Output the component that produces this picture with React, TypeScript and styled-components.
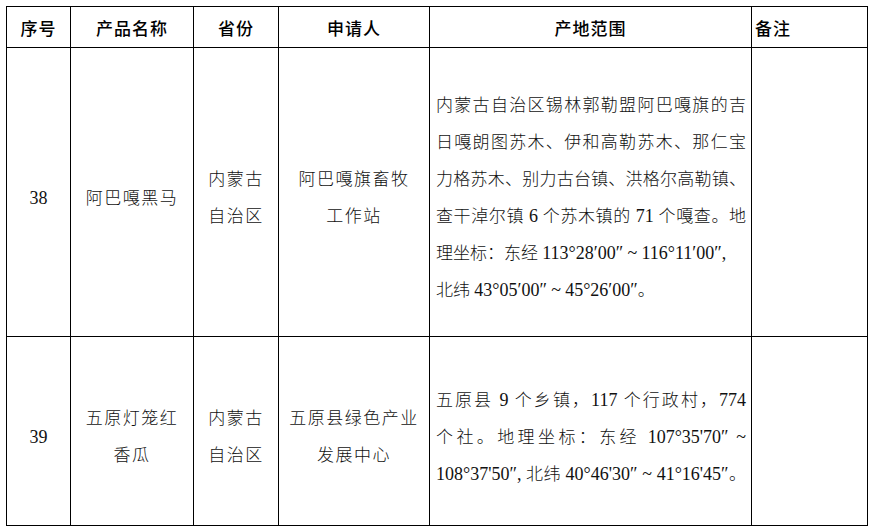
import React from 'react';
import styled, { createGlobalStyle } from 'styled-components';

const GlobalStyle = createGlobalStyle`
  html, body {
    margin: 0;
    padding: 0;
    background: #fff;
  }
`;

const Page = styled.div`
  padding: 6px 0 0 6px;
  font-family: 'Liberation Serif', 'Noto Sans CJK SC', serif;
  color: #111;
`;

const Table = styled.table`
  border-collapse: collapse;
  table-layout: fixed;
  width: 861px;
`;

const Col = styled.col<{ $w: number }>`
  width: ${(p) => p.$w}px;
`;

const HeadRow = styled.tr`
  height: 41px;
`;

const Th = styled.th<{ $align?: 'left' | 'center' }>`
  border: 1px solid #000;
  padding: ${(p) => (p.$align === 'left' ? '0 0 0 3px' : '0')};
  font-family: 'Noto Sans CJK SC', sans-serif;
  font-size: 17px;
  font-weight: 500;
  letter-spacing: 1px;
  color: #000;
  text-align: ${(p) => p.$align ?? 'center'};
  vertical-align: middle;
`;

const BodyRow = styled.tr<{ $h: number }>`
  height: ${(p) => p.$h}px;
`;

const Td = styled.td`
  border: 1px solid #000;
  padding: 12px 0 0;
  vertical-align: middle;
  text-align: center;
  font-family: 'Liberation Serif', 'Noto Sans CJK SC', serif;
  font-size: 17px;
  font-weight: 300;
  line-height: 37px;
  letter-spacing: 1.5px;
`;

const NumCell = styled(Td)`
  font-size: 18px;
  font-weight: 400;
  letter-spacing: 0;
`;

const AreaCell = styled(Td)`
  padding: 12px 5px 0 6px;
  text-align: left;
  letter-spacing: 0;
`;

const Line = styled.div<{ $justify?: boolean }>`
  white-space: nowrap;
  text-align: ${(p) => (p.$justify ? 'justify' : 'left')};
  text-align-last: ${(p) => (p.$justify ? 'justify' : 'left')};
`;

const Latin = styled.span`
  font-size: 18px;
  font-weight: 400;
`;

type AreaLine = { text: string; justify?: boolean };

type Entry = {
  no: string;
  height: number;
  name: string[];
  province: string[];
  applicant: string[];
  area: AreaLine[];
};

const entries: Entry[] = [
  {
    no: '38',
    height: 289,
    name: ['阿巴嘎黑马'],
    province: ['内蒙古', '自治区'],
    applicant: ['阿巴嘎旗畜牧', '工作站'],
    area: [
      { text: '内蒙古自治区锡林郭勒盟阿巴嘎旗的吉', justify: true },
      { text: '日嘎朗图苏木、伊和高勒苏木、那仁宝', justify: true },
      { text: '力格苏木、别力古台镇、洪格尔高勒镇、', justify: true },
      { text: '查干淖尔镇 6 个苏木镇的 71 个嘎查。地', justify: true },
      { text: '理坐标：东经 113°28′00″ ~ 116°11′00″,' },
      { text: '北纬 43°05′00″ ~ 45°26′00″。' },
    ],
  },
  {
    no: '39',
    height: 189,
    name: ['五原灯笼红', '香瓜'],
    province: ['内蒙古', '自治区'],
    applicant: ['五原县绿色产业', '发展中心'],
    area: [
      { text: '五原县 9 个乡镇，117 个行政村，774', justify: true },
      { text: '个社。地理坐标：东经 107°35\'70″ ~', justify: true },
      { text: '108°37\'50″, 北纬 40°46\'30″ ~ 41°16\'45″。', justify: true },
    ],
  },
];

// wrap latin runs (digits, degree marks) so they get the larger serif size
function renderMixed(text: string) {
  return text
    .split(/([0-9°′″'",~.]+)/)
    .filter((s) => s.length > 0)
    .map((s, i) => (/[0-9°′″'",~.]/.test(s) ? <Latin key={i}>{s}</Latin> : <React.Fragment key={i}>{s}</React.Fragment>));
}

function Lines({ items }: { items: string[] }) {
  return (
    <>
      {items.map((t, i) => (
        <React.Fragment key={i}>
          {i > 0 && <br />}
          {t}
        </React.Fragment>
      ))}
    </>
  );
}

export default function App() {
  return (
    <Page>
      <GlobalStyle />
      <Table>
        <colgroup>
          <Col $w={64} />
          <Col $w={123} />
          <Col $w={85} />
          <Col $w={151} />
          <Col $w={322} />
          <Col $w={116} />
        </colgroup>
        <thead>
          <HeadRow>
            <Th>序号</Th>
            <Th>产品名称</Th>
            <Th>省份</Th>
            <Th>申请人</Th>
            <Th>产地范围</Th>
            <Th $align="left">备注</Th>
          </HeadRow>
        </thead>
        <tbody>
          {entries.map((e) => (
            <BodyRow key={e.no} $h={e.height}>
              <NumCell>{e.no}</NumCell>
              <Td>
                <Lines items={e.name} />
              </Td>
              <Td>
                <Lines items={e.province} />
              </Td>
              <Td>
                <Lines items={e.applicant} />
              </Td>
              <AreaCell>
                {e.area.map((l, i) => (
                  <Line key={i} $justify={l.justify}>
                    {renderMixed(l.text)}
                  </Line>
                ))}
              </AreaCell>
              <Td />
            </BodyRow>
          ))}
        </tbody>
      </Table>
    </Page>
  );
}
